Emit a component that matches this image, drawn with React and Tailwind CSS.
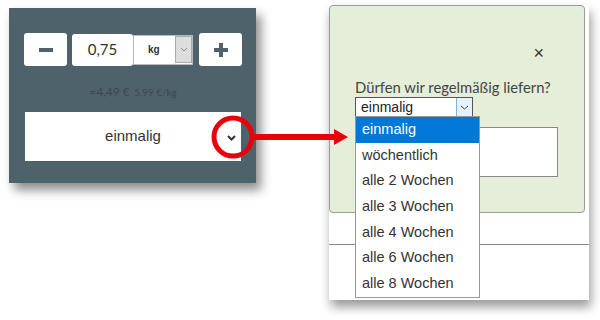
export default function App() {
  const options = [
    "einmalig",
    "wöchentlich",
    "alle 2 Wochen",
    "alle 3 Wochen",
    "alle 4 Wochen",
    "alle 6 Wochen",
    "alle 8 Wochen",
  ];

  return (
    <div className="relative flex items-start w-[600px] h-[320px] overflow-hidden bg-white font-['Lato',sans-serif]">
      {/* Left: product quantity panel */}
      <div className="mt-[8px] ml-[9px] w-[247px] h-[175px] bg-[#4e626c] shadow-[5px_7px_10px_rgba(0,0,0,0.45)] pt-[25px] pl-[15px]">
        <div className="flex items-center h-[33px]">
          <button className="flex items-center justify-center w-[43px] h-[33px] bg-white rounded-[3px]">
            <span className="block w-[14px] h-[4px] bg-[#4e626c]"></span>
          </button>
          <div className="ml-[5px] flex items-center justify-center w-[61px] h-[32px] bg-white rounded-[3px] text-[15px] text-[#333]">
            0,75
          </div>
          <div className="flex items-center w-[60px] h-[30px] bg-white border border-[#bbb] pl-[14px]">
            <span className="w-[27px] text-[10px] font-bold text-[#333] font-['Liberation_Sans',sans-serif]">kg</span>
            <span className="flex items-center justify-center w-[17px] h-[27px] bg-[#ddd] border border-[#aaa]">
              <svg width="8" height="5" viewBox="0 0 8 5">
                <polyline points="1,1 4,4 7,1" fill="none" stroke="#888" strokeWidth="1" />
              </svg>
            </span>
          </div>
          <button className="ml-[6px] flex items-center justify-center w-[43px] h-[33px] bg-white rounded-[3px]">
            <svg width="14" height="14" viewBox="0 0 14 14">
              <rect x="0" y="5" width="14" height="4" fill="#4e626c" />
              <rect x="5" y="0" width="4" height="14" fill="#4e626c" />
            </svg>
          </button>
        </div>
        <div className="w-[218px] mt-[16px] text-center text-[#3a4a52] leading-none">
          <span className="text-[12px]">=4,49 €</span>{" "}
          <span className="text-[10px]">5,99 €/kg</span>
        </div>
        <div className="relative ml-[1px] mt-[14px] flex items-center justify-center w-[216px] h-[49px] bg-white text-[15px] text-[#333] font-['Liberation_Sans',sans-serif]">
          einmalig
          <svg className="absolute right-[5px] top-[23px]" width="9" height="6" viewBox="0 0 9 6">
            <polyline points="1,1 4.5,4.5 8,1" fill="none" stroke="#333" strokeWidth="2" />
          </svg>
        </div>
      </div>

      {/* Right: modal with open select */}
      <div className="relative mt-[5px] ml-[73px] w-[260px] h-[295px] bg-white shadow-[2px_7px_10px_rgba(0,0,0,0.4)]">
        <div className="w-[256px] h-[208px] bg-[#e4eed9] border border-[#999] rounded-[4px] pl-[25px] pt-[40px]">
          <div className="flex justify-end pr-[40px] h-[14px] text-[18px] leading-[14px] text-[#333] font-['Liberation_Sans',sans-serif]">
            ×
          </div>
          <div className="mt-[19px] text-[14.8px] leading-[17px] text-[#444]">
            Dürfen wir regelmäßig liefern?
          </div>
          <div className="mt-[1px] flex items-center w-[118px] h-[20px] bg-white border border-[#555] font-['Liberation_Sans',sans-serif]">
            <span className="flex-1 pl-[5px] text-[14px] text-[#222] leading-none">einmalig</span>
            <span className="flex items-center justify-center w-[16px] h-[18px] bg-[#e5f1fb] border-l border-[#7eb4ea]">
              <svg width="9" height="5" viewBox="0 0 9 5">
                <polyline points="1,1 4.5,4 8,1" fill="none" stroke="#444" strokeWidth="1" />
              </svg>
            </span>
          </div>
          <div className="mt-[10px] w-[203px] h-[50px] bg-white border border-[#888]"></div>
        </div>
        <div className="mt-[31px] border-t border-[#888]"></div>

        <ul className="absolute left-[26px] top-[111px] w-[125px] bg-white border border-[#999] font-['Liberation_Sans',sans-serif] text-[14.5px] text-[#333]">
          {options.map((o, i) => (
            <li
              key={o}
              className={`h-[25.7px] flex items-center pl-[6px] ${i === 0 ? "bg-[#0078d7] text-white" : ""}`}
            >
              {o}
            </li>
          ))}
        </ul>
      </div>

      {/* Red highlight circle and arrow */}
      <svg className="absolute left-[210px] top-[113px]" width="142" height="50" viewBox="0 0 142 50">
        <circle cx="23" cy="24" r="19" fill="none" stroke="#e8000b" strokeWidth="5" />
        <line x1="42" y1="24" x2="127" y2="24" stroke="#e8000b" strokeWidth="6" />
        <polygon points="124,16 138,24 124,32" fill="#e8000b" />
      </svg>
    </div>
  );
}
